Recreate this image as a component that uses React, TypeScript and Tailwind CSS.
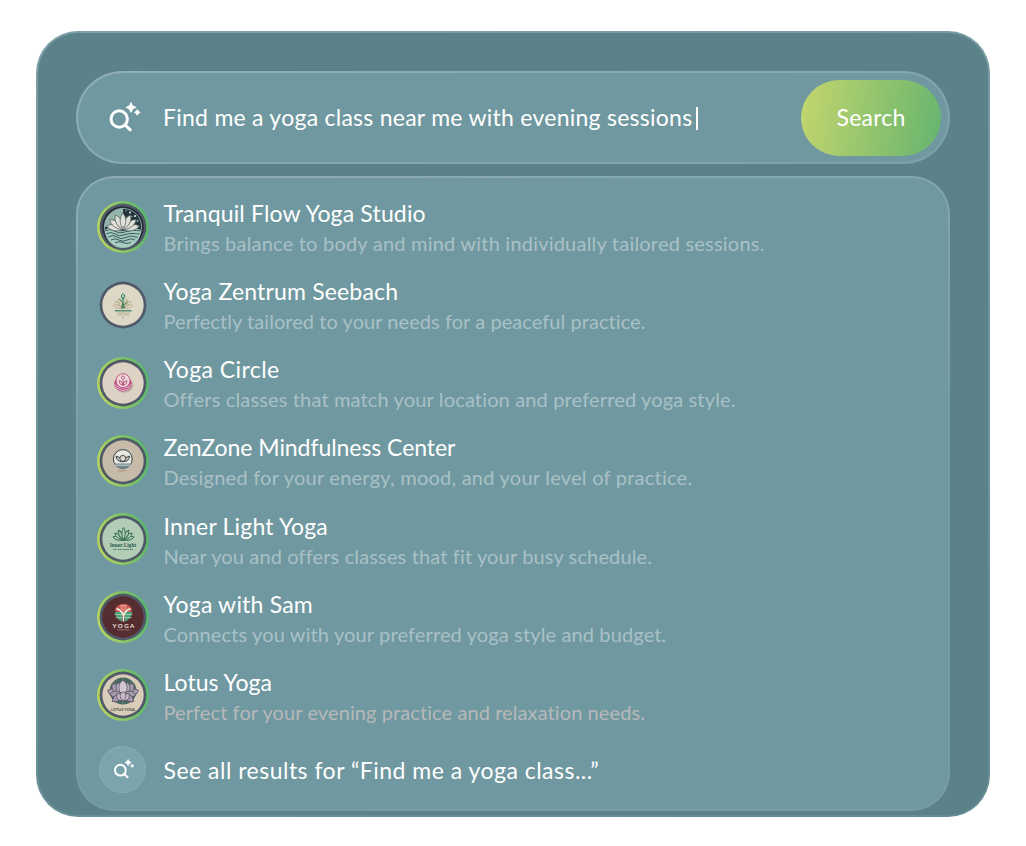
import React from "react";

function SearchSpark({ className }: { className: string }) {
  return (
    <svg viewBox="0 0 34 32" className={className} fill="none">
      <circle cx="12.2" cy="17" r="8.2" stroke="#fff" strokeWidth="3" />
      <path d="M18.3 23.2 L23.3 27.8" stroke="#fff" strokeWidth="3" strokeLinecap="round" />
      <path
        d="M24 0.8 Q24.9 4.5 28.6 5.4 Q24.9 6.3 24 10 Q23.1 6.3 19.4 5.4 Q23.1 4.5 24 0.8Z"
        fill="#fff"
        stroke="#fff"
        strokeWidth="1.2"
        strokeLinejoin="round"
      />
      <path
        d="M30.3 7.9 Q30.8 9.9 32.8 10.4 Q30.8 10.9 30.3 12.9 Q29.8 10.9 27.8 10.4 Q29.8 9.9 30.3 7.9Z"
        fill="#fff"
        stroke="#fff"
        strokeWidth="1.2"
        strokeLinejoin="round"
      />
    </svg>
  );
}

function Petal({ angle, length, width, fill, stroke, cx = 26, cy = 28, sw = 0.6 }: {
  angle: number; length: number; width: number; fill: string; stroke: string; cx?: number; cy?: number; sw?: number;
}) {
  return (
    <path
      transform={`rotate(${angle} ${cx} ${cy})`}
      d={`M${cx} ${cy} Q${cx - width} ${cy - length * 0.6} ${cx} ${cy - length} Q${cx + width} ${cy - length * 0.6} ${cx} ${cy}Z`}
      fill={fill}
      stroke={stroke}
      strokeWidth={sw}
    />
  );
}

function TranquilArt() {
  return (
    <g>
      <circle cx="26" cy="26" r="20.8" fill="#252b39" />
      <circle cx="26" cy="26" r="18.6" fill="#22353c" />
      <path d="M26 7.5 A18.5 18.5 0 0 0 7.5 26 L26 26Z" fill="#93b5aa" />
      <g fill="#e2ebe6">
        <circle cx="33" cy="11.5" r="1" /><circle cx="38" cy="15" r="1.1" /><circle cx="40.5" cy="20" r="0.8" />
        <circle cx="29" cy="9.5" r="0.6" /><circle cx="35" cy="15.5" r="0.6" />
      </g>
      <path d="M8 29 Q13 25 17.5 28 T26 30 T35 28 T44 29 A18 18 0 0 1 8 29Z" fill="#a4cabe" />
      <g stroke="#2f5055" strokeWidth="0.9" fill="none">
        <path d="M8 30 Q13 27 17.5 30 T26 31.5 T35 29.5 T43.5 30" />
        <path d="M9 33 Q14 30 18 33 T27 34 T36 32.5 T43 33" />
        <path d="M11 36 Q16 33 20 36 T29 36.5 T37 35.5 T41 36" />
        <path d="M14 39 Q18 36.5 22 39 T30 39 T38 39" />
        <path d="M18 42 Q22 39.5 26 41.5 T34 41.5" />
      </g>
      {[-76, 76, -52, 52, -27, 27, 0].map((a) => (
        <Petal key={a} angle={a} length={17} width={5.8} fill="#dfdfd8" stroke="#3d4a4d" cy={29} />
      ))}
      <circle cx="26" cy="26.5" r="1.6" fill="#9c9798" />
      <circle cx="26" cy="26" r="18.6" fill="none" stroke="#b8d3cb" strokeWidth="0.7" />
    </g>
  );
}

function ZentrumArt() {
  return (
    <g>
      <circle cx="26" cy="26" r="20.7" fill="#ddd8c6" />
      {[-75, 75, -50, 50, -28, 28].map((a) => (
        <Petal key={a} angle={a} length={10} width={3.4} fill="none" stroke="#b29f78" cy={29} sw={0.6} />
      ))}
      <Petal angle={0} length={6} width={3.4} fill="#b9d1bd" stroke="#287453" cy={20.5} sw={0.9} />
      <path d="M26 18 V30 M26 23 Q22.8 22 22.6 19.5 M26 26 Q29.5 25 29.8 22.5 M26 24 L24.5 29.5 M26 26 L28 29" stroke="#287453" strokeWidth="0.9" fill="none" />
      <path d="M17.8 31.8 H34.5" stroke="#367b5c" strokeWidth="1.2" />
      <path d="M19.5 34 H33 M20.5 35.9 H32" stroke="#aaa07f" strokeWidth="0.7" />
      <circle cx="26" cy="38.5" r="0.7" fill="#81957a" />
    </g>
  );
}

function CircleArt() {
  return (
    <g>
      <circle cx="26" cy="26" r="20.7" fill="#ddd2c4" />
      <ellipse cx="27.5" cy="28.5" rx="9" ry="7.3" fill="#b5a69b" opacity="0.7" />
      <ellipse cx="26" cy="27" rx="9" ry="7.6" fill="#bb4f80" />
      <path d="M17.3 27.3 Q26 35 34.7 27.3 M18.2 30 Q26 36.8 33.8 30" fill="none" stroke="#f0dce1" strokeWidth="0.8" />
      <circle cx="26" cy="23.7" r="7" fill="#ead9d7" stroke="#bb4c7f" strokeWidth="0.9" />
      <path d="M26 29 V23 M26 28 Q21.5 27.5 22.3 23.5 Q25.5 24.5 26 28 Q30.5 27.5 29.7 23.5 Q26.5 24.5 26 28" fill="none" stroke="#b6487c" strokeWidth="0.9" />
      <circle cx="26" cy="20.7" r="1.6" fill="none" stroke="#b6487c" strokeWidth="0.8" />
    </g>
  );
}

function ZenArt() {
  return (
    <g>
      <circle cx="26" cy="26" r="20.7" fill="#c6bba8" />
      <ellipse cx="25" cy="35.8" rx="5" ry="0.8" fill="#b19f8c" />
      <circle cx="25.8" cy="24" r="9.4" fill="#e8e8dd" stroke="#303c46" strokeWidth="1" />
      <path d="M17.4 28.6 H34.2 Q32 33 25.8 33.2 Q19.5 33 17.4 28.6Z" fill="#708891" />
      <path d="M18.6 30.2 H33" stroke="#dce1dc" strokeWidth="0.9" />
      <path d="M19.2 21 Q23 22 25.8 26 Q28.6 22 32.4 21 Q32.5 26.4 25.8 26.8 Q19 26.4 19.2 21Z" fill="#d3cdbd" stroke="#303c46" strokeWidth="1" />
      <circle cx="25.8" cy="23.4" r="3" fill="#dcd6c7" stroke="#303c46" strokeWidth="0.9" />
    </g>
  );
}

function InnerArt() {
  return (
    <g>
      <circle cx="26" cy="26" r="20.7" fill="#b3ccb5" />
      {[-74, 74, -52, 52, -28, 28, 0].map((a) => (
        <Petal key={a} angle={a} length={a === 0 ? 12.5 : 11} width={3.5} fill="#b3ccb5" stroke="#2c674e" cx={26.5} cy={27} sw={0.9} />
      ))}
      <text x="26" y="34" textAnchor="middle" textLength="26.5" lengthAdjust="spacingAndGlyphs" fontSize="6" fontWeight="700" fontFamily="'Liberation Serif', serif" fill="#285f4a">Inner Light</text>
      <path d="M16.5 36.5 H20 M21 36.5 H25 M26 36.5 H32 M33 36.5 H36" stroke="#3b705a" strokeWidth="1" strokeDasharray="1.2 0.5" />
    </g>
  );
}

function SamArt() {
  return (
    <g>
      <circle cx="26" cy="26" r="20.7" fill="#552d30" />
      <path d="M17.8 19.5 A9 9 0 0 1 35.2 19.5 L26.8 26Z" fill="#c85951" />
      <path d="M17.7 21 H25 V30.5 Q19 28.5 17.7 21Z M35.3 21 H28 V30.5 Q34 28.5 35.3 21Z" fill="#4fa37a" />
      <path d="M17.5 23.6 H35.5 M18.6 26.6 H34.5" stroke="#b4d6b6" strokeWidth="0.7" />
      <path d="M19.6 17.6 Q25.2 19.6 26.5 24.5 Q27.8 19.6 33.4 17.6 M26.5 23 V30.5" stroke="#f0e9df" strokeWidth="1.7" fill="none" />
      <path d="M24 14.6 H29 L28.6 18 L26.5 19.6 L24.4 18Z" fill="#e06a5e" stroke="#f0d7c8" strokeWidth="0.6" />
      <text x="26.4" y="36.9" textAnchor="middle" textLength="22" fontSize="6.2" fontWeight="700" fontFamily="Lato, sans-serif" fill="#efe5dc">YOGA</text>
      <path d="M20.3 38.8 H33" stroke="#b69c98" strokeWidth="0.9" strokeDasharray="1.4 0.6" />
    </g>
  );
}

function LotusArt() {
  return (
    <g>
      <circle cx="26" cy="26" r="20.7" fill="#d9ccb8" />
      <circle cx="26" cy="22" r="13.4" fill="#48675f" />
      <path d="M14.5 15 H37.5 M13 20 H39 M26 9 V35 M17 13 L35 31 M35 13 L17 31" stroke="#93a895" strokeWidth="0.5" />
      {[-70, 70, -42, 42].map((a) => (
        <Petal key={a} angle={a} length={16.5} width={8} fill="#ab9db0" stroke="#454556" cy={27} sw={0.7} />
      ))}
      {[-20, 20].map((a) => (
        <Petal key={a} angle={a} length={15.5} width={8} fill="#b8adba" stroke="#454556" cy={28} sw={0.7} />
      ))}
      <Petal angle={0} length={17} width={8.5} fill="#d2c7d0" stroke="#514b60" cy={28} sw={0.7} />
      {[-92, 92, -125, 125].map((a) => (
        <Petal key={a} angle={a} length={13} width={6.5} fill="#a698ad" stroke="#454556" cy={25} sw={0.7} />
      ))}
      {[-38, 38, 0].map((a) => (
        <Petal key={a} angle={a} length={9.5} width={6} fill="#c9b8c8" stroke="#514b60" cy={32} sw={0.7} />
      ))}
      <text x="26" y="42" textAnchor="middle" textLength="24" lengthAdjust="spacingAndGlyphs" fontSize="4.2" fontWeight="700" fontFamily="Lato, sans-serif" fill="#4a4d48">LOTUS YOGA</text>
    </g>
  );
}

type Studio = {
  name: string;
  nameTracking: string;
  text: string;
  textTracking: string;
  Art: () => React.JSX.Element;
  ring: boolean;
  tone?: string;
};

const studios: Studio[] = [
  { name: "Tranquil Flow Yoga Studio", nameTracking: "tracking-[0.16px]", text: "Brings balance to body and mind with individually tailored sessions.", textTracking: "tracking-[0.21px]", Art: TranquilArt, ring: true },
  { name: "Yoga Zentrum Seebach", nameTracking: "tracking-[0.17px]", text: "Perfectly tailored to your needs for a peaceful practice.", textTracking: "tracking-[0.06px]", Art: ZentrumArt, ring: false },
  { name: "Yoga Circle", nameTracking: "tracking-[0.42px]", text: "Offers classes that match your location and preferred yoga style.", textTracking: "tracking-[0.15px]", Art: CircleArt, ring: true },
  { name: "ZenZone Mindfulness Center", nameTracking: "tracking-[-0.06px]", text: "Designed for your energy, mood, and your level of practice.", textTracking: "tracking-[0.24px]", Art: ZenArt, ring: true },
  { name: "Inner Light Yoga", nameTracking: "tracking-[0.2px]", text: "Near you and offers classes that fit your busy schedule.", textTracking: "tracking-[0.14px]", Art: InnerArt, ring: true },
  { name: "Yoga with Sam", nameTracking: "tracking-[0.2px]", text: "Connects you with your preferred yoga style and budget.", textTracking: "tracking-[0.13px]", Art: SamArt, ring: true },
  { name: "Lotus Yoga", nameTracking: "tracking-[0.05px]", text: "Perfect for your evening practice and relaxation needs.", textTracking: "tracking-[0.09px]", Art: LotusArt, ring: true, tone: "text-[#b7b9b9]" },
];

function Avatar({ Art, ring, id }: { Art: () => React.JSX.Element; ring: boolean; id: string }) {
  return (
    <svg viewBox="0 0 52 52" className="mt-[0.5px] size-[52px] shrink-0">
      <defs>
        <linearGradient id={id} x1="0" y1="0.6" x2="1" y2="0.4">
          <stop offset="0" stopColor="#b7d45f" />
          <stop offset="1" stopColor="#55b76d" />
        </linearGradient>
      </defs>
      {ring && <circle cx="26" cy="26" r="26" fill={`url(#${id})`} />}
      <circle cx="26" cy="26" r="23.4" fill="#4f5968" />
      <Art />
    </svg>
  );
}

export default function App() {
  return (
    <div className="h-[846px] w-[1026px] bg-white pt-[31px] pl-[36px] font-['Lato',sans-serif] text-white">
      <div className="h-[786px] w-[954px] rounded-[42px] border-2 border-transparent px-[38px] pt-[38px] [background:linear-gradient(#5b8289,#5b8289)_padding-box,linear-gradient(165deg,#7fa1a8,#6f959c_50%,#648b94)_border-box]">
        <div className="flex h-[93px] w-[874px] items-center rounded-full border-2 border-transparent pr-[7px] pl-[29px] [background:linear-gradient(#7098a0,#7098a0)_padding-box,linear-gradient(170deg,#91b0b7,#7da0a8)_border-box]">
          <SearchSpark className="h-8 w-[34px] shrink-0" />
          <div className="ml-[22px] flex flex-1 items-center pb-[2px]">
            <span className="whitespace-nowrap text-[23px] leading-[30px] tracking-[0.26px]">Find me a yoga class near me with evening sessions</span>
            <span className="mt-[3px] ml-[4px] h-[23px] w-[2px] bg-white" />
          </div>
          <button className="h-[76px] w-[140px] rounded-full bg-[linear-gradient(100deg,#c4d66d,#65b46f)] text-[23px] tracking-[0.2px]">Search</button>
        </div>

        <div className="mt-[12px] h-[635px] w-[874px] rounded-[38px] border-2 border-transparent pt-[22px] pl-[18.5px] [background:linear-gradient(#7098a0,#7098a0)_padding-box,linear-gradient(170deg,#8cadb4,#789ca4_50%,#789ca4)_border-box]">
          {studios.map((s, i) => (
            <div key={s.name} className="flex h-[78.17px] items-start">
              <Avatar Art={s.Art} ring={s.ring} id={`ring-${i}`} />
              <div className="-mt-[2px] ml-[15px] whitespace-nowrap">
                <div className="h-[30px] text-[23px] leading-[30px]"><span className={s.nameTracking}>{s.name}</span></div>
                <div className={`h-[30px] text-[20px] leading-[30px] ${s.tone ?? "text-[#a9c1c6]"}`}><span className={s.textTracking}>{s.text}</span></div>
              </div>
            </div>
          ))}
          <div className="-mt-[1px] flex h-[47px] items-center pl-[2.5px]">
            <div className="flex size-[47px] items-center justify-center rounded-full border border-[#8cadb4] bg-[#7ca4ad]">
              <SearchSpark className="ml-[2px] h-[21px] w-[23px]" />
            </div>
            <span className="ml-[17.5px] whitespace-nowrap text-[23px] leading-[30px] tracking-[0.49px]">See all results for “Find me a yoga class...”</span>
          </div>
        </div>
      </div>
    </div>
  );
}
